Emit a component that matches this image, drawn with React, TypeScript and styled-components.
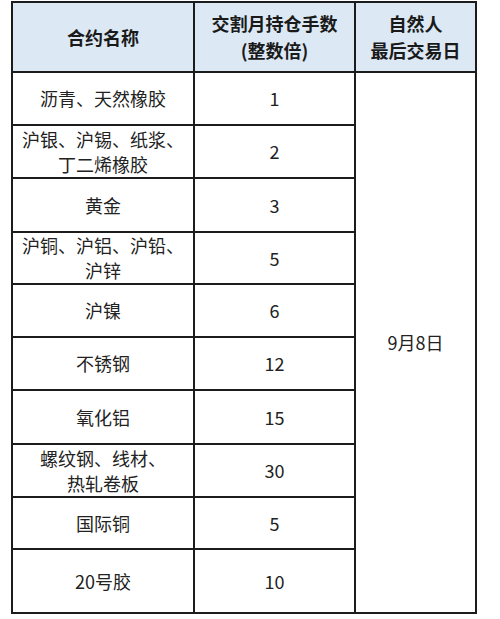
import React, { FC } from 'react';
import styled, { createGlobalStyle } from 'styled-components';

const GlobalStyle = createGlobalStyle`
  html, body {
    margin: 0;
    padding: 0;
    background: #ffffff;
  }
`;

const Page = styled.div`
  padding: 1px 0 0 11px;
  font-family: 'Noto Sans CJK SC', 'Microsoft YaHei', sans-serif;
  color: #222222;
`;

const Table = styled.table`
  border-collapse: collapse;
  table-layout: fixed;
  width: 464px;
  border: 2px solid #1c1c1c;
`;

const HeadCell = styled.th`
  background: #dce9f5;
  border: 2px solid #1c1c1c;
  font-size: 18px;
  font-weight: 700;
  line-height: 27px;
  color: #1a1a1a;
  text-align: center;
  padding: 0;
`;

const Cell = styled.td`
  border: 2px solid #1c1c1c;
  font-size: 18px;
  line-height: 25px;
  text-align: center;
  vertical-align: middle;
  padding: 0;
  white-space: pre-line;
`;

const Row = styled.tr<{ h: number }>`
  height: ${p => p.h}px;
`;

type Item = { name: string; hands: string; h: number };

const items: Item[] = [
  { name: '沥青、天然橡胶', hands: '1', h: 53 },
  { name: '沪银、沪锡、纸浆、\n丁二烯橡胶', hands: '2', h: 53 },
  { name: '黄金', hands: '3', h: 54 },
  { name: '沪铜、沪铝、沪铅、\n沪锌', hands: '5', h: 52 },
  { name: '沪镍', hands: '6', h: 53 },
  { name: '不锈钢', hands: '12', h: 53 },
  { name: '氧化铝', hands: '15', h: 54 },
  { name: '螺纹钢、线材、\n热轧卷板', hands: '30', h: 53 },
  { name: '国际铜', hands: '5', h: 52 },
  { name: '20号胶', hands: '10', h: 64 },
];

const App: FC = () => {
  return (
    <Page>
      <GlobalStyle />
      <Table>
        <colgroup>
          <col style={{ width: 182 }} />
          <col style={{ width: 161 }} />
          <col style={{ width: 121 }} />
        </colgroup>
        <thead>
          <Row h={70}>
            <HeadCell>合约名称</HeadCell>
            <HeadCell>
              交割月持仓手数
              <br />
              (整数倍)
            </HeadCell>
            <HeadCell>
              自然人
              <br />
              最后交易日
            </HeadCell>
          </Row>
        </thead>
        <tbody>
          {items.map((item, i) => (
            <Row h={item.h} key={item.name}>
              <Cell>{item.name}</Cell>
              <Cell>{item.hands}</Cell>
              {i === 0 && <Cell rowSpan={items.length}>9月8日</Cell>}
            </Row>
          ))}
        </tbody>
      </Table>
    </Page>
  );
};

export default App;
